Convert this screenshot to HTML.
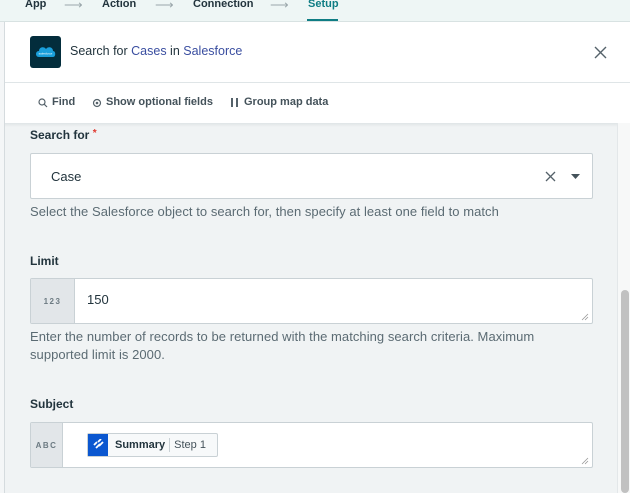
<!DOCTYPE html>
<html><head><meta charset="utf-8"><style>
*{box-sizing:border-box;margin:0;padding:0}
body{width:630px;height:493px;overflow:hidden;font-family:"Liberation Sans",sans-serif;background:#f0f3f4;position:relative;color:#22343d}
.abs{position:absolute}
.nav{left:0;top:0;width:630px;height:22px;background:#eef6f5;border-bottom:1px solid #d8e2e2;font-size:11px;font-weight:bold;color:#22343d}
.nav span{position:absolute;top:-2px}
.arr{color:#9aa7ab;font-weight:normal;font-size:13px}
.leftstrip{left:0;top:22px;width:5px;height:471px;background:#f4f6f7;border-right:1px solid #d5dbde}
.panel{left:5px;top:22px;width:625px;height:101px;background:#fff}
.sep{left:5px;top:82px;width:625px;height:1px;background:#dfe5e7}
.track{left:617px;top:123px;width:13px;height:370px;background:#f7f8f8;border-left:1px solid #e3e7e9}
.thumb{left:621px;top:290px;width:8px;height:203px;background:#c1c1c1;border-radius:4px}
.lbl{font-size:12px;font-weight:bold;color:#22343d}
.help{font-size:13px;color:#5b6b73;line-height:18px;letter-spacing:0.05px}
.box{background:#fff;border:1px solid #c9d1d5;border-radius:2px}
.pre{background:#e2e6e9;border-right:1px solid #c9d1d5;color:#6c7a82;font-size:8px;font-weight:bold;letter-spacing:1.5px;display:flex;align-items:center;justify-content:center}
.tb{font-size:11px;font-weight:bold;color:#44525a;top:96px}
</style></head><body>
<div class="abs nav">
<span style="left:25px">App</span><span class="arr" style="left:64px;top:-3px">⟶</span>
<span style="left:102px">Action</span><span class="arr" style="left:155px;top:-3px">⟶</span>
<span style="left:193px">Connection</span><span class="arr" style="left:270px;top:-3px">⟶</span>
<span style="left:308px;color:#0f7d84">Setup</span>
<div class="abs" style="left:307px;top:19px;width:31px;height:2px;background:#0f7d84"></div>
</div>
<div class="abs leftstrip"></div>
<div class="abs panel"></div>
<div class="abs sep"></div>
<div class="abs" style="left:30px;top:36px;width:31px;height:32px;background:#032d3c;border-radius:3px"></div>
<svg class="abs" style="left:35px;top:45px" width="21" height="14" viewBox="0 0 21 14"><path d="M4 12 C0 12 0 6 4 6 C4 2 9 1 11 4 C13 1 18 2 18 6 C21 6 21 12 18 12 Z" fill="#1a9fdb"/><text x="10.5" y="9.5" font-size="3" fill="#fff" text-anchor="middle" font-family="Liberation Sans">salesforce</text></svg>
<div class="abs" style="left:70px;top:44px;font-size:12.5px;color:#22343d">Search for <span style="color:#3a4ea0">Cases</span> in <span style="color:#3a4ea0">Salesforce</span></div>
<svg class="abs" style="left:594px;top:46px" width="13" height="13" viewBox="0 0 13 13"><path d="M1 1L12 12M12 1L1 12" stroke="#55626a" stroke-width="1.4"/></svg>
<svg class="abs" style="left:38px;top:98px" width="10" height="10" viewBox="0 0 10 10"><circle cx="4" cy="4" r="3" fill="none" stroke="#55626a" stroke-width="1.2"/><path d="M6.2 6.2L9 9" stroke="#55626a" stroke-width="1.2"/></svg>
<div class="abs tb" style="left:52px">Find</div>
<svg class="abs" style="left:92px;top:98px" width="10" height="10" viewBox="0 0 10 10"><circle cx="5" cy="5" r="3.5" fill="none" stroke="#55626a" stroke-width="1.2"/><circle cx="5" cy="5" r="1.3" fill="#55626a"/></svg>
<div class="abs tb" style="left:106px">Show optional fields</div>
<div class="abs" style="left:231px;top:98px;width:2px;height:9px;background:#55626a"></div>
<div class="abs" style="left:236px;top:98px;width:2px;height:9px;background:#55626a"></div>
<div class="abs tb" style="left:244px">Group map data</div>
<div class="abs" style="left:5px;top:123px;width:612px;height:4px;background:linear-gradient(#dfe4e6,#f0f3f4)"></div>

<div class="abs lbl" style="left:30px;top:128px">Search for <span style="color:#e0372d;font-size:10px;vertical-align:top">*</span></div>
<div class="abs box" style="left:30px;top:153px;width:563px;height:46px"></div>
<div class="abs" style="left:51px;top:169px;font-size:13px">Case</div>
<svg class="abs" style="left:545px;top:171px" width="11" height="11" viewBox="0 0 11 11"><path d="M1 1L10 10M10 1L1 10" stroke="#55626a" stroke-width="1.3"/></svg>
<svg class="abs" style="left:571px;top:174px" width="9" height="5" viewBox="0 0 9 5"><path d="M0 0H9L4.5 5Z" fill="#44525a"/></svg>
<div class="abs help" style="left:30px;top:203px">Select the Salesforce object to search for, then specify at least one field to match</div>

<div class="abs lbl" style="left:30px;top:254px">Limit</div>
<div class="abs box" style="left:30px;top:278px;width:563px;height:46px;display:flex"><div class="pre" style="width:44px">123</div><div style="padding:13px 0 0 12px;font-size:13px">150</div></div>
<svg class="abs" style="left:581px;top:313px" width="8" height="8"><path d="M1 7L7 1M4 7L7 4" stroke="#999" stroke-width="0.8"/></svg>
<div class="abs help" style="left:30px;top:328px">Enter the number of records to be returned with the matching search criteria. Maximum<br>supported limit is 2000.</div>

<div class="abs lbl" style="left:30px;top:397px">Subject</div>
<div class="abs box" style="left:30px;top:422px;width:563px;height:46px;display:flex"><div class="pre" style="width:32px">ABC</div></div>
<svg class="abs" style="left:581px;top:457px" width="8" height="8"><path d="M1 7L7 1M4 7L7 4" stroke="#999" stroke-width="0.8"/></svg>
<div class="abs" style="left:87px;top:433px;width:131px;height:24px;border:1px solid #c9d1d5;border-radius:2px;background:#f7f9fa;display:flex;align-items:center;font-size:11px">
<div style="width:20px;height:22px;background:#0b57d0;display:flex;align-items:center;justify-content:center"><svg width="12" height="12" viewBox="0 0 12 12"><path d="M2 6L5 3M4 9L8 5M6 3L9 0M7 7L11 3" stroke="#fff" stroke-width="1.8"/></svg></div>
<b style="margin-left:7px;color:#22343d">Summary</b><span style="margin:0 4px;width:1px;height:14px;background:#c9d1d5"></span><span style="color:#44525a">Step 1</span></div>

<div class="abs track"></div>
<div class="abs thumb"></div>
</body></html>
